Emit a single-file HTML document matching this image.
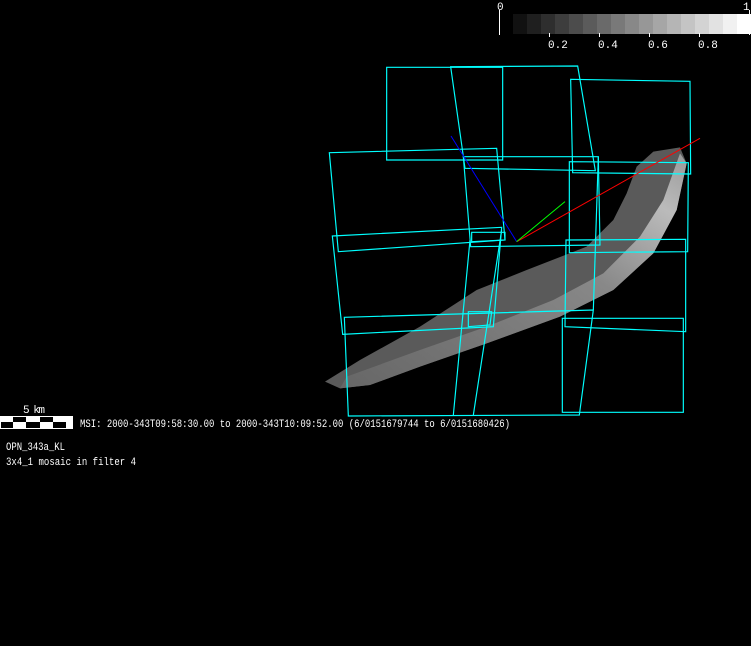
<!DOCTYPE html>
<html><head><meta charset="utf-8"><style>
html,body{margin:0;padding:0;background:#000;width:751px;height:646px;overflow:hidden}
svg{display:block}
text{font-family:"Liberation Mono","DejaVu Sans Mono",monospace;fill:#fff;font-size:11px}
</style></head><body>
<svg width="751" height="646" viewBox="0 0 751 646" xmlns="http://www.w3.org/2000/svg">
<rect width="751" height="646" fill="#000"/>
<g>
<rect x="513" y="14" width="14" height="20" fill="#111"/>
<rect x="527" y="14" width="14" height="20" fill="#1f1f1f"/>
<rect x="541" y="14" width="14" height="20" fill="#2e2e2e"/>
<rect x="555" y="14" width="14" height="20" fill="#3d3d3d"/>
<rect x="569" y="14" width="14" height="20" fill="#4c4c4c"/>
<rect x="583" y="14" width="14" height="20" fill="#5b5b5b"/>
<rect x="597" y="14" width="14" height="20" fill="#6a6a6a"/>
<rect x="611" y="14" width="14" height="20" fill="#797979"/>
<rect x="625" y="14" width="14" height="20" fill="#888"/>
<rect x="639" y="14" width="14" height="20" fill="#979797"/>
<rect x="653" y="14" width="14" height="20" fill="#a6a6a6"/>
<rect x="667" y="14" width="14" height="20" fill="#b5b5b5"/>
<rect x="681" y="14" width="14" height="20" fill="#c4c4c4"/>
<rect x="695" y="14" width="14" height="20" fill="#d3d3d3"/>
<rect x="709" y="14" width="14" height="20" fill="#e2e2e2"/>
<rect x="723" y="14" width="14" height="20" fill="#f1f1f1"/>
<rect x="737" y="14" width="14" height="20" fill="#fff"/>
<g stroke="#fff" stroke-width="1">
<line x1="499.5" y1="10" x2="499.5" y2="35"/>
<line x1="749.5" y1="10" x2="749.5" y2="35"/>
<line x1="549.5" y1="33" x2="549.5" y2="37"/>
<line x1="599.5" y1="33" x2="599.5" y2="37"/>
<line x1="649.5" y1="33" x2="649.5" y2="37"/>
<line x1="699.5" y1="33" x2="699.5" y2="37"/>
</g>
<text x="497" y="10">0</text>
<text x="743" y="10">1</text>
<text x="548" y="48">0.2</text>
<text x="598" y="48">0.4</text>
<text x="648" y="48">0.6</text>
<text x="698" y="48">0.8</text>
</g>
<g transform="translate(320,60) scale(0.33333)">
<defs>
<linearGradient id="g" x1="0" y1="1" x2="1" y2="0">
<stop offset="0" stop-color="#666"/>
<stop offset="0.6" stop-color="#888"/>
<stop offset="0.85" stop-color="#bbb"/>
<stop offset="1" stop-color="#999"/>
</linearGradient>
</defs>
<path d="M15,965 L120,900 L300,800 L470,690 L620,630 L800,560 L880,480 L920,400 L950,320 L1000,275 L1080,262 L1100,310 L1070,450 L1000,580 L880,690 L720,770 L500,850 L300,920 L150,975 L60,985 Z" fill="#5a5a5a"/>
<path d="M60,985 L150,975 L300,920 L500,850 L720,770 L880,690 L1000,580 L1070,450 L1100,310 L1080,280 L1030,420 L960,530 L850,640 L700,720 L500,800 L300,870 L80,950 Z" fill="url(#g)"/>
<g fill="none" stroke="#00ffff" stroke-width="3.5">
<polygon points="200,22 548,22 548,300 200,300"/>
<polygon points="392,20 773,18 826,332 435,325"/>
<polygon points="752,58 1110,64 1112,342 758,338"/>
<polygon points="28,278 530,265 555,540 55,575"/>
<polygon points="37,528 545,502 520,800 68,823"/>
<polygon points="430,290 835,290 840,555 452,560"/>
<polygon points="748,305 1105,308 1103,575 748,578"/>
<polygon points="738,540 1097,538 1097,815 735,800"/>
<polygon points="727,775 1090,775 1090,1057 727,1057"/>
<polygon points="73,772 820,750 778,1065 85,1068"/>
<polygon points="445,755 515,755 510,795 445,800"/>
<polygon points="455,517 555,517 555,540 455,545"/>
<polyline points="450,540 400,1065"/>
<polyline points="545,510 460,1065"/>
<polyline points="835,290 820,750"/>
</g>
<line x1="393" y1="228" x2="590" y2="545" stroke="#0000ff" stroke-width="3"/>
<line x1="590" y1="545" x2="1140" y2="235" stroke="#ff0000" stroke-width="3"/>
<line x1="590" y1="545" x2="735" y2="425" stroke="#00ff00" stroke-width="3"/>
</g>
<rect x="0" y="416" width="73" height="13" fill="#fff"/>
<g fill="#000">
<rect x="13" y="417" width="13" height="5"/>
<rect x="40" y="417" width="13" height="5"/>
<rect x="1" y="422" width="12" height="6"/>
<rect x="26" y="422" width="14" height="6"/>
<rect x="53" y="422" width="13" height="6"/>
</g>
<text x="23" y="413" textLength="22">5 km</text>
<text x="80" y="427" textLength="430" lengthAdjust="spacingAndGlyphs">MSI: 2000-343T09:58:30.00 to 2000-343T10:09:52.00 (6/0151679744 to 6/0151680426)</text>
<text x="6" y="450" textLength="59" lengthAdjust="spacingAndGlyphs">OPN_343a_KL</text>
<text x="6" y="465" textLength="130" lengthAdjust="spacingAndGlyphs">3x4_1 mosaic in filter 4</text>
</svg>
</body></html>
